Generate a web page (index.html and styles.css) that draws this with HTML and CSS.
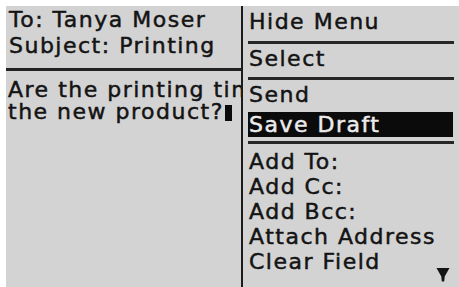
FILE: index.html
```html
<!DOCTYPE html>
<html>
<head>
<meta charset="utf-8">
<link rel="stylesheet" href="styles.css">
</head>
<body>
<div class="frame">
  <div class="screen">
    <div class="compose">
      <div class="header">
        <div class="field">To: Tanya Moser</div>
        <div class="field">Subject: Printing</div>
      </div>
      <div class="rule"></div>
      <div class="message">
        <div class="msg-line">Are the printing times</div>
        <div class="msg-line">the new product?<span class="cursor"></span></div>
      </div>
    </div>
    <div class="divider"></div>
    <div class="menu">
      <div class="item item-first">Hide Menu</div>
      <div class="sep sep-a"></div>
      <div class="item">Select</div>
      <div class="sep sep-b"></div>
      <div class="item">Send</div>
      <div class="item selected">Save Draft</div>
      <div class="sep sep-c"></div>
      <div class="item">Add To:</div>
      <div class="item">Add Cc:</div>
      <div class="item">Add Bcc:</div>
      <div class="item">Attach Address</div>
      <div class="item">Clear Field</div>
      <svg class="more" width="14" height="15" viewBox="0 0 14 15"><path d="M0.5 1 L13.5 1 L8.7 9.5 L8.2 14.5 L5.8 14.5 L5.3 9.5 Z" fill="#141414"/></svg>
    </div>
  </div>
</div>
</body>
</html>
```

FILE: styles.css
```css
html, body {
  margin: 0;
  padding: 0;
  background: #ffffff;
}
body {
  width: 459px;
  height: 287px;
  overflow: hidden;
  font-family: "DejaVu Sans", "Liberation Sans", sans-serif;
  font-size: 22px;
  letter-spacing: 1.5px;
  color: #141414;
  -webkit-text-stroke: 0.5px #141414;
}
.frame {
  box-sizing: border-box;
  height: 287px;
  padding: 6px 0 0 6px;
}
.screen {
  display: flex;
  height: 281px;
  background: #d3d3d3;
}
.compose {
  width: 235px;
  overflow: hidden;
  white-space: nowrap;
}
.header {
  padding: 1px 0 0 3px;
}
.field {
  height: 26px;
  line-height: 26px;
}
.rule {
  height: 3px;
  margin-top: 9px;
  background: #222222;
}
.message {
  padding: 8px 0 0 2px;
}
.msg-line {
  height: 22px;
  line-height: 22px;
}
.cursor {
  display: inline-block;
  width: 7px;
  height: 16px;
  margin-left: 1px;
  background: #0c0c0c;
  vertical-align: -2px;
}
.divider {
  width: 2px;
  background: #1c1c1c;
}
.menu {
  position: relative;
  flex: 1;
  padding: 3px 5px 0 5px;
  white-space: nowrap;
}
.item {
  height: 25px;
  line-height: 25px;
  padding-left: 1px;
}
.sep {
  height: 3px;
  background: #262626;
}
.sep-a {
  margin: 7px 0 2px;
}
.sep-b {
  margin: 6px 0 2px;
}
.sep-c {
  margin: 4px 0 5px;
}
.selected {
  margin-top: 5px;
  margin-right: 1px;
  background: #0b0b0b;
  color: #ececec;
  -webkit-text-stroke: 0.5px #ececec;
}
.more {
  position: absolute;
  right: 9px;
  bottom: 5px;
}
```
